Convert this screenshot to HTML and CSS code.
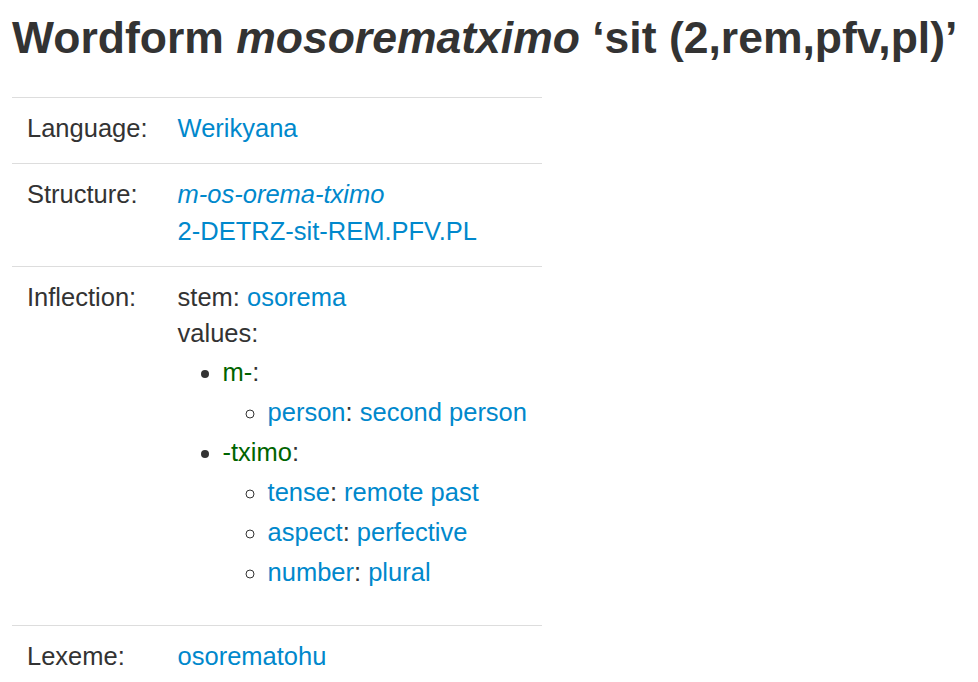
FILE: index.html
```html
<!DOCTYPE html>
<html>
  <head>
    <meta charset="UTF-8" />
    <title>Wordform mosorematximo</title>
    <link rel="stylesheet" href="styles.css">
  </head>
  <body>
    <h1>Wordform <i>mosorematximo</i> ‘sit (2,rem,pfv,pl)’</h1>
    <table class="info">
      <tr>
        <th>Language:</th>
        <td><a href="#">Werikyana</a></td>
      </tr>
      <tr>
        <th>Structure:</th>
        <td class="links">
          <i><a href="#">m</a>-<a href="#">os</a>-<a href="#">orema</a>-<a href="#">tximo</a></i><br>
          <a href="#">2</a>-<a href="#">DETRZ</a>-<a href="#">sit</a>-<a href="#">REM</a>.<a href="#">PFV</a>.<a href="#">PL</a>
        </td>
      </tr>
      <tr>
        <th>Inflection:</th>
        <td>
          stem: <a href="#">osorema</a><br>
          values:
          <ul class="values">
            <li>
              <span class="morph">m-</span>:
              <ul>
                <li><a href="#">person</a>: <a href="#">second person</a></li>
              </ul>
            </li>
            <li>
              <span class="morph">-tximo</span>:
              <ul>
                <li><a href="#">tense</a>: <a href="#">remote past</a></li>
                <li><a href="#">aspect</a>: <a href="#">perfective</a></li>
                <li><a href="#">number</a>: <a href="#">plural</a></li>
              </ul>
            </li>
          </ul>
        </td>
      </tr>
      <tr>
        <th>Lexeme:</th>
        <td><a href="#">osorematohu</a></td>
      </tr>
    </table>
  </body>
</html>
```

FILE: styles.css
```css
body {
  margin: 0;
  padding: 0 12px;
  font-family: "Liberation Sans", Arial, sans-serif;
  font-size: 25.5px;
  line-height: 36.5px;
  color: #333;
  background: #fff;
}

h1 {
  margin: 14px 0 35px;
  font-size: 44.5px;
  line-height: 48px;
  font-weight: bold;
  color: #333;
  white-space: nowrap;
}

a {
  color: #0088cc;
  text-decoration: none;
}

.links {
  color: #0088cc;
}

.info {
  border-collapse: collapse;
}

.info th,
.info td {
  padding: 12px 15px 16.5px;
  border-top: 1px solid #ddd;
  text-align: left;
  vertical-align: top;
}

.info th {
  width: 117px;
  font-weight: normal;
}

.values {
  margin: 0 0 17px 45px;
  padding: 0;
}

.values ul {
  margin: 0 0 0 45px;
  padding: 0;
  list-style: circle;
}

.values li {
  line-height: 40px;
}

.morph {
  color: #006400;
}
```
